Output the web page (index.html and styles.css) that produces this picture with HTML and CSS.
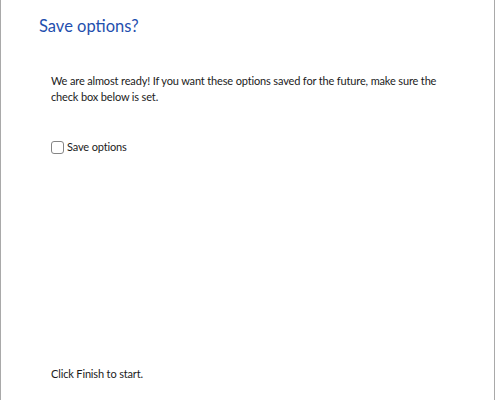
FILE: index.html
```html
<!DOCTYPE html>
<html>
<head>
<meta charset="utf-8">
<link rel="stylesheet" href="styles.css">
</head>
<body>
<div class="page">
  <h1 class="title">Save options?</h1>
  <div class="content">
    <p class="intro">We are almost ready! If you want these options saved for the future, make sure the check box below is set.</p>
    <label class="check"><span class="box"></span><span>Save options</span></label>
    <div class="spacer"></div>
    <p class="finish">Click Finish to start.</p>
  </div>
</div>
</body>
</html>
```
FILE: styles.css
```css
html, body { margin: 0; padding: 0; background: #fff; }
.page {
  box-sizing: border-box;
  width: 495px;
  height: 400px;
  border-left: 1px solid #a9a9a9;
  border-right: 1px solid #a9a9a9;
  display: flex;
  flex-direction: column;
  font-family: Lato, "Noto Sans", sans-serif;
  color: #1b1b1b;
}
.title {
  margin: 0;
  padding: 15px 0 0 38px;
  font-size: 16.5px;
  font-weight: normal;
  color: #1f4fae;
  line-height: 22px;
}
.content {
  flex: 1;
  display: flex;
  flex-direction: column;
  padding: 0 0 18px 50px;
  font-size: 11px;
  letter-spacing: -0.15px;
  line-height: 16px;
}
.intro {
  margin: 36px 0 0 0;
  width: 395px;
}
.check {
  margin-top: 34px;
  display: flex;
  align-items: center;
  gap: 3px;
}
.box {
  box-sizing: border-box;
  width: 13px;
  height: 13px;
  border: 1px solid #858585;
  border-radius: 3px;
  background: #fff;
}
.spacer { flex: 1; }
.finish {
  margin: 0;
}
```
